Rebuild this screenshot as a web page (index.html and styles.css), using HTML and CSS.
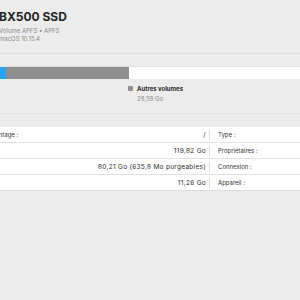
FILE: index.html
```
<!DOCTYPE html>
<html lang="fr">
<head>
    <meta charset="UTF-8">
    <title>Utilitaire de disque</title>
    <link rel="stylesheet" href="styles.css">
</head>
<body>
    <div id="window">
        <div class="header">
            <h1>BX500 SSD</h1>
            <p class="sub">Volume APFS • APFS</p>
            <p class="sub">macOS 10.15.4</p>
        </div>

        <div class="usage">
            <div class="bar">
                <div class="seg seg-used" style="width: 6px"></div>
                <div class="seg seg-other" style="width: 123px"></div>
            </div>
            <div class="legend">
                <span class="dot"></span>
                <div>
                    <div class="legend-name">Autres volumes</div>
                    <div class="legend-size">28,59 Go</div>
                </div>
            </div>
        </div>

        <div class="info">
            <div class="cell left"><span class="label">Point de montage :</span><span class="value">/</span></div>
            <div class="cell right"><span class="label">Type :</span><span class="value">Volume APFS</span></div>
            <div class="cell left"><span class="label">Capacité :</span><span class="value">119,82 Go</span></div>
            <div class="cell right"><span class="label">Propriétaires :</span><span class="value">Activé</span></div>
            <div class="cell left"><span class="label">Disponible :</span><span class="value">80,21 Go (635,8 Mo purgeables)</span></div>
            <div class="cell right"><span class="label">Connexion :</span><span class="value">SATA</span></div>
            <div class="cell left last"><span class="label">Utilisé :</span><span class="value">11,26 Go</span></div>
            <div class="cell right last"><span class="label">Appareil :</span><span class="value">disk1s1</span></div>
        </div>
    </div>
</body>
</html>
```

FILE: styles.css
```
body {
    margin: 0;
    background-color: #ececec;
    font-family: Inter, "Liberation Sans", sans-serif;
    color: #2b2b2b;
    overflow: hidden;
}

#window {
    width: 300px;
    height: 300px;
}

.header {
    padding: 9px 0 0 0;
    margin-left: -1px;
    height: 44px;
    border-bottom: 1px solid #dedede;
}

h1 {
    margin: 0 0 3px 0;
    font-size: 12px;
    font-weight: 700;
    color: #262626;
}

.sub {
    margin: 0 0 1px 0;
    font-size: 6px;
    line-height: 7px;
    color: #8a8a8a;
}

.usage {
    padding-top: 13px;
    height: 46px;
    border-bottom: 1px solid #e3e3e3;
}

.bar {
    display: flex;
    height: 12px;
    background-color: #fff;
    box-shadow: 0 -1px 0 #e0e0e0;
}

.seg-used {
    background-color: #1fa6f6;
}

.seg-other {
    background-color: #8f8f8f;
}

.legend {
    display: flex;
    gap: 4px;
    margin: 6px 0 0 128px;
}

.dot {
    width: 5px;
    height: 5px;
    margin-top: 1px;
    border-radius: 1px;
    background-color: #8f8f8f;
}

.legend-name {
    font-size: 6px;
    font-weight: 700;
    line-height: 7px;
    color: #2b2b2b;
}

.legend-size {
    margin-top: 3px;
    font-size: 6px;
    line-height: 7px;
    color: #8a8a8a;
}

/* info table, left labels run off the left edge */
.info {
    display: grid;
    grid-template-columns: 259px 259px;
    margin: 13px 0 0 -50px;
    background-color: #fff;
}

.cell {
    display: flex;
    justify-content: space-between;
    align-items: center;
    height: 15px;
    border-bottom: 1px solid #e2e2e2;
    white-space: nowrap;
}

.cell.last {
    border-bottom-color: #dcdcdc;
}

.label {
    font-size: 6px;
    color: #333;
}

.value {
    font-size: 6.5px;
    letter-spacing: 0.3px;
    color: #2b2b2b;
}

.left {
    padding: 0 3px 0 15px;
}

.right {
    padding: 0 12px 0 9px;
    position: relative;
}

.right::before {
    content: "";
    position: absolute;
    left: 0;
    top: 2px;
    bottom: 2px;
    border-left: 1px solid #dcdcdc;
}
```
